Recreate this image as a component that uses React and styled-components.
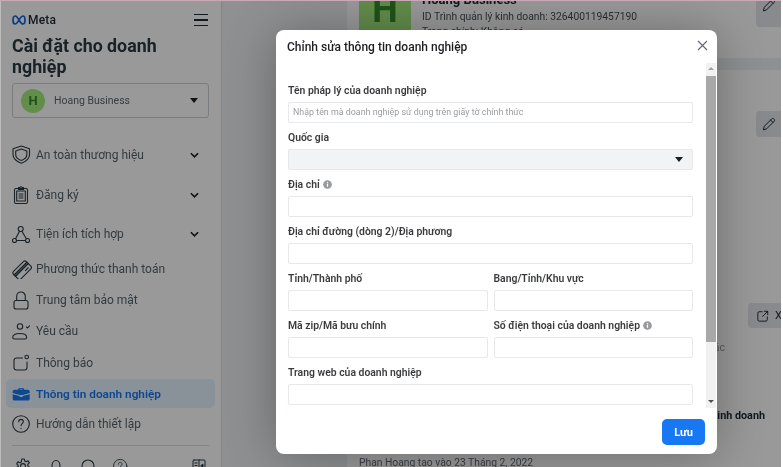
import styled, { createGlobalStyle } from "styled-components";

const GlobalStyle = createGlobalStyle`
    html, body {
        margin: 0;
        padding: 0;
        background: #fff;
        font-family: Roboto, "Liberation Sans", sans-serif;
    }
    * { box-sizing: border-box; }
`

const strokeProps = { fill: "none", stroke: "currentColor", strokeWidth: 1.1, strokeLinecap: "round", strokeLinejoin: "round" };

function MetaLogo(){
    return(
        <svg width="14" height="10" viewBox="0 0 14 10" fill="none" stroke="#0668e1" strokeWidth="1.7">
            <path d="M7 5C5.6 2.6 4.6 1 3.2 1 1.8 1 1 2.8 1 5.2 1 7.6 1.8 9 3.1 9 5 9 6 6.6 7 5c1-1.6 2-4 3.9-4C12.2 1 13 2.6 13 5c0 2.4-.8 4-2.2 4C9.4 9 8.4 7.4 7 5Z" />
        </svg>
    )
}

function ShieldIcon(){
    return(
        <svg width="20" height="20" viewBox="0 0 20 20" {...strokeProps}>
            <path d="M9.3 1 17.5 3.8V9.5c0 4-3.4 7-8.2 8.7C4.500 16.500 1 13.500 1 9.500V3.800Z" />
            <path d="M9.3 4 14.800 5.900V9.500c0 2.800-2.300 4.900-5.500 6-3.200-1.100-5.600-3.200-5.600-6V5.900Z" />
        </svg>
    )
}

function ClipboardIcon(){
    return(
        <svg width="20" height="20" viewBox="0 0 20 20" {...strokeProps}>
            <rect x="2.500" y="3.500" width="13" height="15" rx="1.500" />
            <rect x="4.700" y="6" width="8.600" height="10" />
            <path d="M6.500 3.500V2.500H8c.2-1 1.800-1 2 0h1.500v2h-5ZM7 9h4M7 11h4M7 13h4" />
        </svg>
    )
}

function NetworkIcon(){
    return(
        <svg width="20" height="20" viewBox="0 0 20 20" {...strokeProps}>
            <circle cx="8.700" cy="5" r="2.500" />
            <circle cx="2.500" cy="16.500" r="2" />
            <circle cx="15.500" cy="16.500" r="2" />
            <path d="M7.500 7.300 3.600 14.800M9.900 7.300 14.400 14.800M4.500 16.500h9" />
        </svg>
    )
}

function CardIcon(){
    return(
        <svg width="20" height="20" viewBox="0 0 20 20" {...strokeProps}>
            <g transform="translate(0 1) rotate(-45 10 10)">
                <rect x="1" y="5" width="18" height="10.500" rx="2" />
                <path d="M1 8h18M1 9.800h18" strokeWidth="1.500" />
                <path d="M12 12.800h4" />
            </g>
        </svg>
    )
}

function LockIcon(){
    return(
        <svg width="20" height="20" viewBox="0 0 20 20" {...strokeProps}>
            <rect x="2" y="10.500" width="14" height="8.500" rx="2" />
            <path d="M4.700 10.500V6.300a4.300 4.300 0 0 1 8.600 0v4.200" />
        </svg>
    )
}

function PersonCheckIcon(){
    return(
        <svg width="20" height="20" viewBox="0 0 20 20" {...strokeProps}>
            <circle cx="8" cy="5.500" r="2.700" />
            <path d="M2.500 18c-1.300 0-1.800-.7-1.800-1.600 0-2.300 2.700-3.900 7-3.900s7 1.600 7 3.900c0 .9-.5 1.600-1.800 1.600Z" />
            <path d="M14.500 6 15.500 7 17.500 4.800" />
        </svg>
    )
}

function NoticeIcon(){
    return(
        <svg width="20" height="20" viewBox="0 0 20 20" {...strokeProps}>
            <path d="M10.500 5H4.500A2.500 2.500 0 0 0 2 7.500v7A2.500 2.500 0 0 0 4.500 17h8a2.500 2.500 0 0 0 2.500-2.500V9" />
            <circle cx="14.700" cy="4" r="1.800" />
        </svg>
    )
}

function BriefcaseIcon(){
    return(
        <svg width="20" height="20" viewBox="0 0 20 20">
            <path transform="translate(-.8 2.200) scale(1 .8)" fill="currentColor" d="M7 4.500V3.800C7 3 7.600 2.500 8.300 2.500h3.400c.7 0 1.300.5 1.300 1.300v.7h3.500c1.100 0 2 .9 2 2v2L11.500 11h-3L1.500 8.500v-2c0-1.100.9-2 2-2Zm1.500 0h3v-.6h-3ZM1.500 10l7 2.400v1.100h3v-1.100l7-2.400v6c0 1.100-.9 2-2 2h-13c-1.100 0-2-.9-2-2Z" />
        </svg>
    )
}

function QuestionIcon({ size = 20 }){
    return(
        <svg width={size} height={size} viewBox="0 0 20 20" {...strokeProps}>
            <circle cx="9" cy="10" r="8.300" />
            <path d="M6.700 7.800c0-1.500 1-2.400 2.300-2.400s2.300.9 2.300 2.200c0 2-2.300 2-2.300 4M9 14.300v.3" />
        </svg>
    )
}

function GearIcon(){
    return(
        <svg width="16" height="16" viewBox="0 0 16 16" {...strokeProps}>
            <circle cx="8" cy="8" r="2.400" />
            <path d="M6.700 1h2.600l.4 2 1.500.7 1.800-1 1.300 2.200-1.500 1.400v1.400l1.500 1.400-1.300 2.200-1.800-1-1.500.7-.4 2H6.700l-.4-2-1.500-.7-1.800 1-1.300-2.200L3.200 8.700V7.300L1.700 5.900 3 3.700l1.800 1 1.500-.7Z" />
        </svg>
    )
}

function BellIcon(){
    return(
        <svg width="16" height="16" viewBox="0 0 16 16" {...strokeProps}>
            <path d="M2.500 13c1-1 1.500-2.500 1.500-5 0-3 1.700-5.500 4-5.500S12 5 12 8c0 2.500.5 4 1.500 5Z" />
        </svg>
    )
}

function RoundIcon(){
    return(
        <svg width="16" height="16" viewBox="0 0 16 16" {...strokeProps}>
            <circle cx="8" cy="8" r="6" />
        </svg>
    )
}

function PanelIcon(){
    return(
        <svg width="14" height="14" viewBox="0 0 14 14" {...strokeProps} strokeWidth="1">
            <rect x="1" y="1" width="12" height="12" rx="1" />
            <path d="M7 1v12M2.800 4h2.400M2.800 6.500h2.400M2.800 9h2.400" />
            <path d="M11 5.500v3L9 7Z" fill="currentColor" />
        </svg>
    )
}

function PencilIcon(){
    return(
        <svg width="14" height="14" viewBox="0 0 14 14" {...strokeProps} strokeWidth="1">
            <path d="M1.500 12.500 2.300 9.300 9.800 1.800c.5-.5 1.300-.5 1.800 0l.6.600c.5.500.5 1.300 0 1.800L4.700 11.700Z" />
            <path d="M8.600 3 11 5.400" />
        </svg>
    )
}

function ExternalIcon(){
    return(
        <svg width="12" height="12" viewBox="0 0 14 14" {...strokeProps} strokeWidth="1.100">
            <path d="M6 2H2.500C1.700 2 1 2.700 1 3.500v8C1 12.300 1.700 13 2.500 13h8c.8 0 1.500-.7 1.500-1.500V8" />
            <path d="M6.500 7.500 12.500 1.500M8.500 1.500h4v4" />
        </svg>
    )
}

function InfoIcon(){
    return(
        <svg width="9" height="9" viewBox="0 0 10 10">
            <circle cx="5" cy="5" r="4.800" fill="#8a8d91" />
            <rect x="4.300" y="4.300" width="1.400" height="3.200" fill="#fff" />
            <rect x="4.300" y="2.400" width="1.400" height="1.300" fill="#fff" />
        </svg>
    )
}

function CloseIcon(){
    return(
        <svg width="11" height="11" viewBox="0 0 11 11" fill="none" stroke="#606770" strokeWidth="1.100">
            <path d="M1 1 10 10M10 1 1 10" />
        </svg>
    )
}

function Chevron(){
    return(
        <svg width="9" height="6" viewBox="0 0 10 6" fill="none" stroke="#1c1e21" strokeWidth="1.800">
            <path d="M1 1 5 5 9 1" />
        </svg>
    )
}

const navItems = [
    { label: "An toàn thương hiệu", icon: <ShieldIcon />, expandable: true, height: 40 },
    { label: "Đăng ký", icon: <ClipboardIcon />, expandable: true, height: 40 },
    { label: "Tiện ích tích hợp", icon: <NetworkIcon />, expandable: true, height: 38 },
    { label: "Phương thức thanh toán", icon: <CardIcon />, height: 32 },
    { label: "Trung tâm bảo mật", icon: <LockIcon />, height: 30 },
    { label: "Yêu cầu", icon: <PersonCheckIcon />, height: 32 },
    { label: "Thông báo", icon: <NoticeIcon />, height: 32 },
    { label: "Thông tin doanh nghiệp", icon: <BriefcaseIcon />, active: true, height: 29 },
    { label: "Hướng dẫn thiết lập", icon: <QuestionIcon />, height: 32 },
];

function Sidebar(){
    return(
        <Side>
            <LogoRow>
                <Logo><MetaLogo /><LogoText>Meta</LogoText></Logo>
                <Burger><i /><i /><i /></Burger>
            </LogoRow>
            <SideTitle>Cài đặt cho doanh nghiệp</SideTitle>
            <BusinessSelect>
                <Avatar>H</Avatar>
                <BusinessName>Hoang Business</BusinessName>
                <Caret />
            </BusinessSelect>
            <Nav>
                {navItems.map((item) => (
                    <NavRow key={item.label} $active={item.active} $height={item.height}>
                        <NavIcon>{item.icon}</NavIcon>
                        <NavLabel $active={item.active}>{item.label}</NavLabel>
                        {item.expandable && <ChevronSlot><Chevron /></ChevronSlot>}
                    </NavRow>
                ))}
            </Nav>
            <SideFooter>
                <GearIcon /><BellIcon /><RoundIcon /><QuestionIcon size={16} />
                <PanelSlot><PanelIcon /></PanelSlot>
            </SideFooter>
        </Side>
    )
}

function Background(){
    return(
        <Main>
            <TopCard>
                <BigAvatar>H</BigAvatar>
                <TopInfo>
                    <TopName>Hoang Business</TopName>
                    <TopLine>ID Trình quản lý kinh doanh: 326400119457190</TopLine>
                    <TopLine>Trang chính: Không có</TopLine>
                </TopInfo>
                <EditButton $overhang><PencilIcon /></EditButton>
            </TopCard>
            <InfoCard>
                <EditButton><PencilIcon /></EditButton>
                <ViewButton><ExternalIcon /><span>X</span></ViewButton>
                <FadedLine>Thông tin liên hệ khác</FadedLine>
                <BoldLine>Thông tin về hoạt động kinh doanh</BoldLine>
                <CreatedLine>Phan Hoang tạo vào 23 Tháng 2, 2022</CreatedLine>
            </InfoCard>
        </Main>
    )
}

function Field({ label, placeholder, info, disabled, select }){
    return(
        <FieldBox>
            <Label>{label}{info && <InfoSlot><InfoIcon /></InfoSlot>}</Label>
            <InputWrap>
                <Input placeholder={placeholder} disabled={disabled} />
                {select && <SelectCaret />}
            </InputWrap>
        </FieldBox>
    )
}

function EditModal(){
    return(
        <Modal>
            <ModalHeader>
                <ModalTitle>Chỉnh sửa thông tin doanh nghiệp</ModalTitle>
                <CloseButton><CloseIcon /></CloseButton>
            </ModalHeader>
            <ModalBody>
                <Form>
                    <Field label="Tên pháp lý của doanh nghiệp" placeholder="Nhập tên mà doanh nghiệp sử dụng trên giấy tờ chính thức" />
                    <Field label="Quốc gia" disabled select />
                    <Field label="Địa chỉ" info />
                    <Field label="Địa chỉ đường (dòng 2)/Địa phương" />
                    <TwoCols>
                        <Field label="Tỉnh/Thành phố" />
                        <Field label="Bang/Tỉnh/Khu vực" />
                    </TwoCols>
                    <TwoCols>
                        <Field label="Mã zip/Mã bưu chính" />
                        <Field label="Số điện thoại của doanh nghiệp" info />
                    </TwoCols>
                    <Field label="Trang web của doanh nghiệp" />
                </Form>
                <Scrollbar>
                    <ArrowUp />
                    <Thumb />
                    <TrackRest />
                    <ArrowDown />
                </Scrollbar>
            </ModalBody>
            <ModalFooter>
                <SaveButton>Lưu</SaveButton>
            </ModalFooter>
        </Modal>
    )
}

export default function App(){
    return(
        <>
            <GlobalStyle />
            <Page>
                <Sidebar />
                <Background />
                <Overlay>
                    <EditModal />
                </Overlay>
                <TopStrip />
                <LeftStrip />
            </Page>
        </>
    )
}

const Page = styled.div`
    width: 781px;
    height: 467px;
    position: relative;
    overflow: hidden;
    display: flex;
    background: #eff0f2;
    filter: blur(0.3px);
`

const TopStrip = styled.div`
    position: absolute;
    top: 0;
    left: 0;
    right: 0;
    height: 1px;
    background: #c9a7b4;
`

const LeftStrip = styled.div`
    position: absolute;
    top: 1px;
    bottom: 0;
    left: 0;
    width: 1px;
    background: #bdbdbd;
`

const Overlay = styled.div`
    position: absolute;
    inset: 0;
    background: rgba(0, 0, 0, 0.4);
`

const Side = styled.aside`
    width: 222px;
    height: 467px;
    flex-shrink: 0;
    background: #fff;
    border-right: 1px solid #dadde1;
    padding: 13px 12px 0;
    display: flex;
    flex-direction: column;
    overflow: hidden;
    & > * {
        flex-shrink: 0;
    }
`

const LogoRow = styled.div`
    height: 14px;
    display: flex;
    align-items: center;
    justify-content: space-between;
`

const Logo = styled.div`
    display: flex;
    align-items: center;
    gap: 2px;
`

const LogoText = styled.span`
    font-size: 12px;
    font-weight: 500;
    letter-spacing: 0.2px;
    color: #1c2b33;
`

const Burger = styled.div`
    width: 14px;
    margin-right: 1px;
    display: flex;
    flex-direction: column;
    gap: 4.5px;
    i {
        display: block;
        height: 1.2px;
        background: #1c2b33;
    }
`

const SideTitle = styled.h1`
    margin: 8px 0 0;
    font-size: 17.8px;
    line-height: 21px;
    font-weight: 700;
    color: #2b3a42;
    width: 180px;
`

const BusinessSelect = styled.div`
    margin-top: 6px;
    width: 197px;
    height: 35px;
    border: 1px solid #ccd0d5;
    border-radius: 3px;
    display: flex;
    align-items: center;
    padding: 0 10px 0 8px;
`

const Avatar = styled.div`
    width: 24px;
    height: 24px;
    border-radius: 50%;
    background: #a3ec7e;
    color: #358a2a;
    font-size: 13px;
    font-weight: 700;
    display: flex;
    align-items: center;
    justify-content: center;
`

const BusinessName = styled.span`
    margin-left: 9px;
    flex: 1;
    font-size: 10.5px;
    color: #606770;
`

const Caret = styled.div`
    width: 0;
    height: 0;
    border-left: 4.5px solid transparent;
    border-right: 4.5px solid transparent;
    border-top: 5px solid #1c1e21;
`

const Nav = styled.nav`
    margin: 17px -6px 0;
    display: flex;
    flex-direction: column;
`

const NavRow = styled.div`
    height: ${props => props.$height}px;
    flex-shrink: 0;
    padding: 0 16px 0 6px;
    display: flex;
    align-items: center;
    border-radius: 5px;
    background: ${props => props.$active ? "#e7f3ff" : "transparent"};
    color: ${props => props.$active ? "#1877f2" : "#2b3a42"};
`

const NavIcon = styled.span`
    width: 20px;
    height: 20px;
    flex-shrink: 0;
    display: flex;
`

const NavLabel = styled.span`
    margin-left: 4px;
    flex: 1;
    font-size: ${props => props.$active ? "11.8px" : "12px"};
    font-weight: ${props => props.$active ? 600 : 400};
    opacity: ${props => props.$active ? 1 : 0.8};
`

const ChevronSlot = styled.span`
    display: flex;
`

const SideFooter = styled.div`
    margin-top: 5px;
    padding: 12px 3px 0;
    border-top: 1px solid #dadde1;
    display: flex;
    gap: 16.5px;
    color: #2b3a42;
    svg {
        flex-shrink: 0;
    }
`

const PanelSlot = styled.span`
    margin-left: auto;
`

const Main = styled.main`
    flex: 1;
    padding-left: 125px;
    height: 467px;
    display: flex;
    flex-direction: column;
    gap: 12px;
    overflow: hidden;
`

const TopCard = styled.section`
    height: 68px;
    margin-top: -10px;
    flex-shrink: 0;
    background: #fff;
    display: flex;
    position: relative;
    padding: 0 12px;
`

const BigAvatar = styled.div`
    width: 52px;
    height: 52px;
    padding-top: 12px;
    margin-top: -12px;
    background: #a3ec7e;
    color: #358a2a;
    font-size: 36px;
    font-weight: 700;
    display: flex;
    align-items: center;
    justify-content: center;
    flex-shrink: 0;
    align-self: flex-start;
`

const TopInfo = styled.div`
    margin-left: 11px;
    display: flex;
    flex-direction: column;
`

const TopName = styled.div`
    font-size: 13px;
    line-height: 15px;
    margin-top: 2px;
    margin-bottom: 1.5px;
    font-weight: 700;
    color: #1c2b33;
`

const TopLine = styled.div`
    font-size: 10.3px;
    line-height: 15px;
    color: #1c2b33;
    opacity: 0.85;
`

const EditButton = styled.div`
    position: absolute;
    right: 0;
    top: ${props => props.$overhang ? "0" : "41px"};
    width: 25px;
    height: ${props => props.$overhang ? "37px" : "26px"};
    padding-bottom: ${props => props.$overhang ? "8px" : "0"};
    background: #e4e6eb;
    border-radius: 4px 0 0 4px;
    color: #1c2b33;
    display: flex;
    align-items: center;
    justify-content: center;
`

const InfoCard = styled.section`
    flex: 1;
    background: #fff;
    position: relative;
    padding: 0 12px;
`

const ViewButton = styled.div`
    position: absolute;
    right: 0;
    top: 233px;
    width: 33px;
    height: 25px;
    overflow: hidden;
    background: #e4e6eb;
    border-radius: 4px 0 0 4px;
    color: #1c2b33;
    font-size: 11px;
    display: flex;
    align-items: center;
    gap: 6px;
    padding-left: 9px;
    svg {
        flex-shrink: 0;
    }
`

const FadedLine = styled.div`
    position: absolute;
    left: 12px;
    top: 271px;
    width: 366px;
    text-align: right;
    font-size: 10.5px;
    color: #90949c;
`

const BoldLine = styled.div`
    position: absolute;
    left: 12px;
    top: 339px;
    width: 406px;
    text-align: right;
    font-size: 10.8px;
    font-weight: 700;
    color: #1c2b33;
`

const CreatedLine = styled.div`
    position: absolute;
    left: 12px;
    top: 386px;
    font-size: 10.3px;
    color: #606770;
`

const Modal = styled.div`
    position: absolute;
    left: 276px;
    top: 30px;
    width: 441px;
    height: 424px;
    background: #fff;
    border-radius: 8px;
    box-shadow: 0 2px 50px rgba(0, 0, 0, 0.3);
    display: flex;
    flex-direction: column;
`

const ModalHeader = styled.header`
    height: 33px;
    flex-shrink: 0;
    padding: 0 10px 0 11px;
    display: flex;
    align-items: center;
    justify-content: space-between;
`

const ModalTitle = styled.h2`
    margin: 0;
    padding-top: 1px;
    font-size: 12px;
    font-weight: 500;
    color: #1c1e21;
`

const CloseButton = styled.div`
    width: 11px;
    height: 11px;
    margin-top: -2px;
    margin-right: -1px;
    display: flex;
`

const ModalBody = styled.div`
    height: 345px;
    flex-shrink: 0;
    display: flex;
    padding-right: 1px;
`

const Form = styled.div`
    flex: 1;
    min-width: 0;
    overflow: hidden;
    padding: 19.5px 13px 0 12px;
    display: flex;
    flex-direction: column;
    gap: 7px;
`

const FieldBox = styled.div`
    flex-shrink: 0;
    min-width: 0;
    display: flex;
    flex-direction: column;
`

const TwoCols = styled.div`
    flex-shrink: 0;
    display: grid;
    grid-template-columns: 1fr 1fr;
    gap: 6px;
`

const Label = styled.label`
    height: 15px;
    margin-bottom: 4px;
    display: flex;
    align-items: center;
    gap: 3px;
    font-size: 10.4px;
    font-weight: 600;
    white-space: nowrap;
    color: #1c1e21;
    opacity: 0.88;
`

const InfoSlot = styled.span`
    display: flex;
`

const InputWrap = styled.div`
    position: relative;
`

const Input = styled.input`
    display: block;
    width: 100%;
    height: 21px;
    padding: 0 4px;
    border: 1px solid #e6e8ea;
    border-radius: 2px;
    background: ${props => props.disabled ? "#f2f3f5" : "#fff"};
    font-family: inherit;
    font-size: 8.9px;
    outline: none;
    &::placeholder {
        color: #9a9da1;
    }
`

const SelectCaret = styled.span`
    position: absolute;
    right: 10px;
    top: 8px;
    width: 0;
    height: 0;
    border-left: 4.5px solid transparent;
    border-right: 4.5px solid transparent;
    border-top: 5px solid #1c1e21;
`

const Scrollbar = styled.div`
    width: 10px;
    flex-shrink: 0;
    background: #f1f1f1;
    display: flex;
    flex-direction: column;
    align-items: stretch;
`

const ArrowUp = styled.div`
    height: 13px;
    position: relative;
    &::after {
        content: "";
        position: absolute;
        left: 2px;
        top: 4px;
        border-left: 3px solid transparent;
        border-right: 3px solid transparent;
        border-bottom: 3px solid #a3a3a3;
    }
`

const ArrowDown = styled.div`
    height: 13px;
    position: relative;
    &::after {
        content: "";
        position: absolute;
        left: 2px;
        top: 5px;
        border-left: 3px solid transparent;
        border-right: 3px solid transparent;
        border-top: 3px solid #505050;
    }
`

const Thumb = styled.div`
    height: 266px;
    background: #a8a8a8;
`

const TrackRest = styled.div`
    flex: 1;
`

const ModalFooter = styled.footer`
    flex: 1;
    display: flex;
    justify-content: flex-end;
    padding: 11px 12px 0 0;
`

const SaveButton = styled.button`
    width: 43px;
    height: 26px;
    border: none;
    border-radius: 5px;
    background: #1877f2;
    color: #fff;
    font-family: inherit;
    font-size: 11px;
    font-weight: 700;
`
